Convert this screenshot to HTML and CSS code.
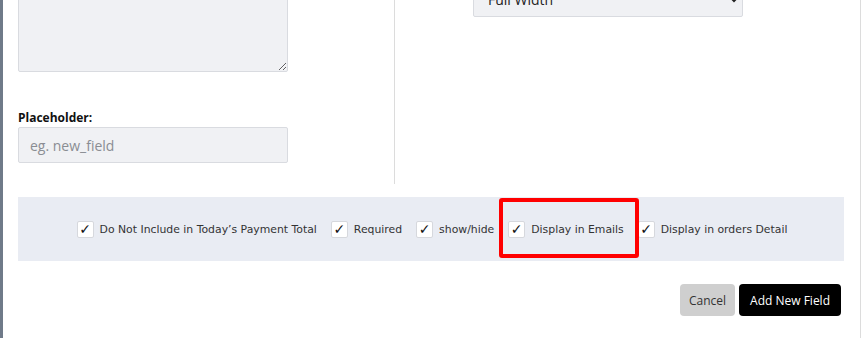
FILE: index.html
```html
<!DOCTYPE html>
<html>
    <head>
        <meta charset="utf-8">
        <title>Add New Field</title>
        <link rel="stylesheet" href="styles.css">
    </head>
    <body>
        <div class="modal">
            <div class="modal-body">
                <div class="form-grid">
                    <div class="form-col left-col">
                        <textarea class="field-textarea"></textarea>
                        <label class="field-label">Placeholder:</label>
                        <input class="field-input" type="text" placeholder="eg. new_field">
                    </div>
                    <div class="form-col right-col">
                        <select class="field-select">
                            <option>Full Width</option>
                        </select>
                    </div>
                </div>

                <div class="options-panel">
                    <label class="option"><span class="check">&#10003;</span>Do Not Include in Today’s Payment Total</label>
                    <label class="option"><span class="check">&#10003;</span>Required</label>
                    <label class="option"><span class="check">&#10003;</span>show/hide</label>
                    <label class="option highlighted"><span class="check">&#10003;</span>Display in Emails</label>
                    <label class="option"><span class="check">&#10003;</span>Display in orders Detail</label>
                </div>

                <div class="actions">
                    <button class="btn cancel-btn">Cancel</button>
                    <button class="btn add-btn">Add New Field</button>
                </div>
            </div>
        </div>
    </body>
</html>
```

FILE: styles.css
```css
* {
    box-sizing: border-box;
}
body {
    margin: 0px;
    padding: 0px;
    background-color: #ffffff;
    font-family: 'Open Sans', sans-serif;
    overflow: hidden;
}

.modal {
    width: 861px;
    height: 338px;
    border-left: 3px solid #6f7a89;
    border-right: 1px solid #dcdcdc;
    background-color: white;
    display: flow-root;
    overflow: hidden;
}

.modal-body {
    padding-left: 15px;
    padding-right: 16px;
}

.form-grid {
    display: flex;
    margin-top: -30px;
    height: 214px;
}

.form-col {
    display: flex;
    flex-direction: column;
}

.left-col {
    width: 377px;
    border-right: 1px solid #dcdcdc;
}

.right-col {
    padding-left: 78px;
    padding-top: 11px;
}

.field-textarea {
    width: 270px;
    height: 91px;
    margin: 11px 0 0 0;
    background-color: #f0f1f4;
    border: 1px solid #d9dbe0;
    border-radius: 2px;
    resize: vertical;
}

.field-label {
    margin-top: 37px;
    font-size: 12px;
    font-weight: bold;
    color: #111;
    line-height: 18px;
    height: 18px;
}

.field-input {
    width: 270px;
    height: 36px;
    padding-left: 11px;
    background-color: #f0f1f4;
    border: 1px solid #d9dbe0;
    border-radius: 2px;
    font-family: 'Open Sans', sans-serif;
    font-size: 14px;
}

.field-input::placeholder {
    color: #8a8d93;
}

.field-select {
    width: 270px;
    height: 36px;
    padding-left: 10px;
    background-color: #f0f1f4;
    border: 1px solid #d9dbe0;
    border-radius: 2px;
    font-family: 'Open Sans', sans-serif;
    font-size: 14px;
    color: #222;
}

.options-panel {
    margin-top: 13px;
    height: 64px;
    background-color: #e9ecf3;
    display: flex;
    justify-content: center;
    align-items: center;
    gap: 14px;
    padding-left: 2px;
}

.option {
    display: flex;
    align-items: center;
    gap: 6px;
    font-family: 'DejaVu Sans', sans-serif;
    font-size: 10.85px;
    color: #333;
}

.check {
    width: 17px;
    height: 17px;
    background-color: white;
    border: 1px solid #d6d8dd;
    border-radius: 2px;
    display: flex;
    align-items: center;
    justify-content: center;
    font-size: 14px;
    font-weight: bold;
    color: #111;
}

.highlighted {
    position: relative;
}

.highlighted::after {
    content: "";
    position: absolute;
    left: -9px;
    right: -15px;
    top: -23px;
    bottom: -20px;
    border: 4px solid #ff0000;
    border-radius: 3px;
}

.actions {
    display: flex;
    justify-content: flex-end;
    gap: 4px;
    margin-top: 23px;
    padding-right: 3px;
}

.btn {
    height: 32px;
    padding: 0 9px;
    border: none;
    border-radius: 4px;
    font-family: 'Open Sans', sans-serif;
    font-size: 12px;
}

.cancel-btn {
    background-color: #cfcfcf;
    color: #333;
}

.add-btn {
    padding: 0 11px;
    background-color: #000;
    color: white;
}
```
